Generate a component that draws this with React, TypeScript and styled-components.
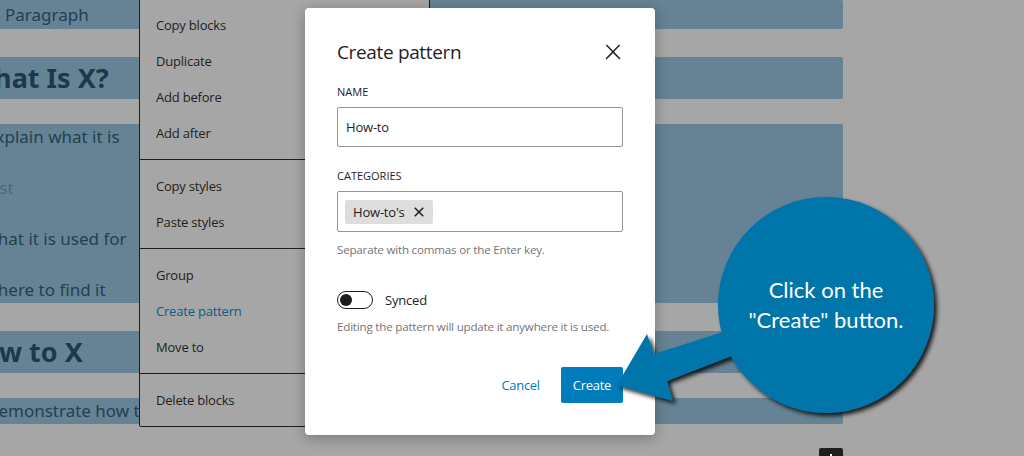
import React from 'react';
import styled, { createGlobalStyle } from 'styled-components';

const GlobalStyle = createGlobalStyle`
  html, body {
    margin: 0;
    padding: 0;
  }
  body {
    background: #a6a6a6;
    font-family: "Open Sans", "Noto Sans", sans-serif;
  }
`;

const Screen = styled.div`
  position: relative;
  width: 1024px;
  height: 456px;
  overflow: hidden;
  background: #a6a6a6;
`;

// editor canvas (the selected blocks behind the dimmed overlay)
const Canvas = styled.div`
  display: flex;
  flex-direction: column;
  width: 843px;
  font-family: "Noto Sans", sans-serif;
`;

const Block = styled.div<{ $h: number; $gap: number }>`
  height: ${p => p.$h}px;
  margin-top: ${p => p.$gap}px;
  background: #658394;
  border-radius: 0 2px 2px 0;
  display: flex;
  flex-direction: column;
  justify-content: center;
  gap: 25px;
  overflow: hidden;
`;

const Line = styled.div<{ $indent: number; $muted?: boolean }>`
  margin-left: ${p => p.$indent}px;
  font-size: 17px;
  line-height: 26px;
  white-space: nowrap;
  color: ${p => (p.$muted ? '#50697a' : '#223f52')};
`;

const Heading = styled.div<{ $indent: number }>`
  margin-left: ${p => p.$indent}px;
  font-size: 27px;
  font-weight: 700;
  line-height: 36px;
  white-space: nowrap;
  color: #1c384b;
`;

// block options dropdown
const Menu = styled.div`
  position: absolute;
  left: 139px;
  top: -2px;
  width: 291px;
  box-sizing: border-box;
  background: #a6a6a6;
  border: 1px solid #1e1e1e;
  border-radius: 2px;
`;

const MenuGroup = styled.div`
  padding: 8px 0;
  & + & {
    border-top: 1px solid #1e1e1e;
  }
`;

const MenuItem = styled.div<{ $active?: boolean }>`
  height: 36px;
  display: flex;
  align-items: center;
  padding: 0 16px;
  font-size: 13px;
  letter-spacing: -0.2px;
  color: ${p => (p.$active ? '#0d5b88' : '#1e1e1e')};
`;

// modal
const Modal = styled.div`
  position: absolute;
  left: 305px;
  top: 8px;
  width: 350px;
  box-sizing: border-box;
  padding: 32px;
  background: #fff;
  border-radius: 4px;
  box-shadow: 0 3px 14px rgba(0, 0, 0, 0.28);
  color: #1e1e1e;
`;

const ModalHeader = styled.div`
  display: flex;
  align-items: center;
  justify-content: space-between;
  height: 24px;
  margin-bottom: 21px;
`;

const Title = styled.h1`
  margin: 0;
  font-size: 19px;
  font-weight: 400;
  line-height: 24px;
  letter-spacing: -0.35px;
`;

const CloseButton = styled.button`
  width: 24px;
  height: 24px;
  margin-right: -2px;
  padding: 0;
  border: none;
  background: none;
  color: #1e1e1e;
  display: flex;
`;

const Field = styled.div<{ $gap: number }>`
  margin-bottom: ${p => p.$gap}px;
`;

const Label = styled.label`
  display: block;
  font-size: 11px;
  font-weight: 500;
  line-height: 14px;
  text-transform: uppercase;
  margin-bottom: 8px;
`;

const TextInput = styled.div`
  height: 40px;
  box-sizing: border-box;
  border: 1px solid #949494;
  border-radius: 2px;
  padding: 0 8px;
  display: flex;
  align-items: center;
  font-size: 13px;
  letter-spacing: -0.2px;
`;

const TokenInput = styled.div`
  height: 41px;
  box-sizing: border-box;
  border: 1px solid #949494;
  border-radius: 2px;
  padding: 0 7px;
  display: flex;
  align-items: center;
`;

const Token = styled.span`
  display: inline-flex;
  align-items: center;
  height: 24px;
  padding: 0 2px 0 8px;
  background: #ddd;
  border-radius: 2px;
  font-size: 13px;
  letter-spacing: -0.2px;
  color: #1e1e1e;
`;

const TokenRemove = styled.span`
  display: flex;
  width: 24px;
  height: 24px;
  margin-left: 2px;
`;

const Help = styled.p<{ $top: number }>`
  margin: ${p => p.$top}px 0 0;
  font-size: 11.6px;
  line-height: 16px;
  letter-spacing: -0.2px;
  white-space: nowrap;
  color: #757575;
`;

const ToggleRow = styled.div`
  display: flex;
  align-items: center;
  gap: 12px;
  margin-top: 33px;
  font-size: 13px;
  letter-spacing: -0.2px;
`;

const Track = styled.span`
  position: relative;
  width: 36px;
  height: 18px;
  box-sizing: border-box;
  border: 1px solid #1e1e1e;
  border-radius: 9px;
  background: #fff;
  &::after {
    content: '';
    position: absolute;
    left: 2px;
    top: 2px;
    width: 12px;
    height: 12px;
    border-radius: 50%;
    background: #1e1e1e;
  }
`;

const Actions = styled.div`
  display: flex;
  justify-content: flex-end;
  align-items: center;
  gap: 9px;
  margin-top: 32px;
`;

const Button = styled.button<{ $primary?: boolean }>`
  height: 36px;
  padding: 0 12px;
  border: none;
  border-radius: 2px;
  font-family: inherit;
  font-size: 13px;
  letter-spacing: -0.3px;
  cursor: pointer;
  background: ${p => (p.$primary ? '#007cba' : 'transparent')};
  color: ${p => (p.$primary ? '#fff' : '#007cba')};
`;

// tutorial annotation drawn over the screenshot
const Annotation = styled.svg`
  position: absolute;
  left: 0;
  top: 0;
  width: 1024px;
  height: 456px;
  pointer-events: none;
`;

const CalloutText = styled.div`
  position: absolute;
  left: 718px;
  top: 275px;
  width: 216px;
  text-align: center;
  font-family: "Lato", "Open Sans", sans-serif;
  font-size: 22px;
  line-height: 30px;
  color: #fff;
`;

const Inserter = styled.div`
  position: absolute;
  left: 819px;
  top: 448px;
  width: 24px;
  height: 24px;
  border-radius: 2px;
  background: #1e1e1e;
  color: #fff;
  display: flex;
`;

const menuGroups = [
  ['Copy blocks', 'Duplicate', 'Add before', 'Add after'],
  ['Copy styles', 'Paste styles'],
  ['Group', 'Create pattern', 'Move to'],
  ['Delete blocks'],
];

const App: React.FC = () => {
  return (
    <Screen>
      <GlobalStyle />

      <Canvas>
        <Block $h={29} $gap={0}>
          <Line $indent={5}>Paragraph</Line>
        </Block>
        <Block $h={42} $gap={28}>
          <Heading $indent={-32}>What Is X?</Heading>
        </Block>
        <Block $h={179} $gap={25}>
          <Line $indent={-14}>Explain what it is</Line>
          <Line $indent={-14} $muted>List</Line>
          <Line $indent={-18}>What it is used for</Line>
          <Line $indent={-18}>Where to find it</Line>
        </Block>
        <Block $h={42} $gap={28}>
          <Heading $indent={-38}>How to X</Heading>
        </Block>
        <Block $h={26} $gap={25}>
          <Line $indent={-14}>Demonstrate how to</Line>
        </Block>
      </Canvas>

      <Menu>
        {menuGroups.map((group, i) => (
          <MenuGroup key={i}>
            {group.map(item => (
              <MenuItem key={item} $active={item === 'Create pattern'}>
                {item}
              </MenuItem>
            ))}
          </MenuGroup>
        ))}
      </Menu>

      <Modal>
        <ModalHeader>
          <Title>Create pattern</Title>
          <CloseButton aria-label="Close">
            <svg width="24" height="24" viewBox="0 0 24 24" fill="currentColor">
              <path d="M13 11.8l6.1-6.3-1-1-6.1 6.2-6.1-6.2-1 1 6.1 6.3-6.5 6.7 1 1 6.5-6.6 6.5 6.6 1-1z" />
            </svg>
          </CloseButton>
        </ModalHeader>

        <Field $gap={22}>
          <Label>Name</Label>
          <TextInput>How-to</TextInput>
        </Field>

        <Field $gap={0}>
          <Label>Categories</Label>
          <TokenInput>
            <Token>
              How-to's
              <TokenRemove>
                <svg width="24" height="24" viewBox="0 0 24 24" fill="currentColor">
                  <path d="M12 13.06l3.712 3.713 1.061-1.06L13.061 12l3.712-3.712-1.06-1.06L12 10.938 8.288 7.227l-1.061 1.06L10.939 12l-3.712 3.712 1.06 1.061L12 13.061z" />
                </svg>
              </TokenRemove>
            </Token>
          </TokenInput>
          <Help $top={10}>Separate with commas or the Enter key.</Help>
        </Field>

        <ToggleRow>
          <Track />
          Synced
        </ToggleRow>
        <Help $top={10}>Editing the pattern will update it anywhere it is used.</Help>

        <Actions>
          <Button>Cancel</Button>
          <Button $primary>Create</Button>
        </Actions>
      </Modal>

      <Inserter>
        <svg width="24" height="24" viewBox="0 0 24 24" fill="currentColor">
          <path d="M11 6h2v5h5v2h-5v5h-2v-5H6v-2h5z" />
        </svg>
      </Inserter>

      <Annotation viewBox="0 0 1024 456">
        <defs>
          <filter id="callout-shadow" x="-10%" y="-10%" width="130%" height="130%">
            <feDropShadow dx="3" dy="3" stdDeviation="2" floodColor="#000" floodOpacity="0.85" />
          </filter>
        </defs>
        <g fill="#0274aa" filter="url(#callout-shadow)">
          <polygon points="617,385 647,334 654,354 745,325 755,347 667,381 673,401" />
          <circle cx="826" cy="305" r="108" />
        </g>
      </Annotation>
      <CalloutText>
        Click on the
        <br />
        "Create" button.
      </CalloutText>
    </Screen>
  );
};

export default App;
